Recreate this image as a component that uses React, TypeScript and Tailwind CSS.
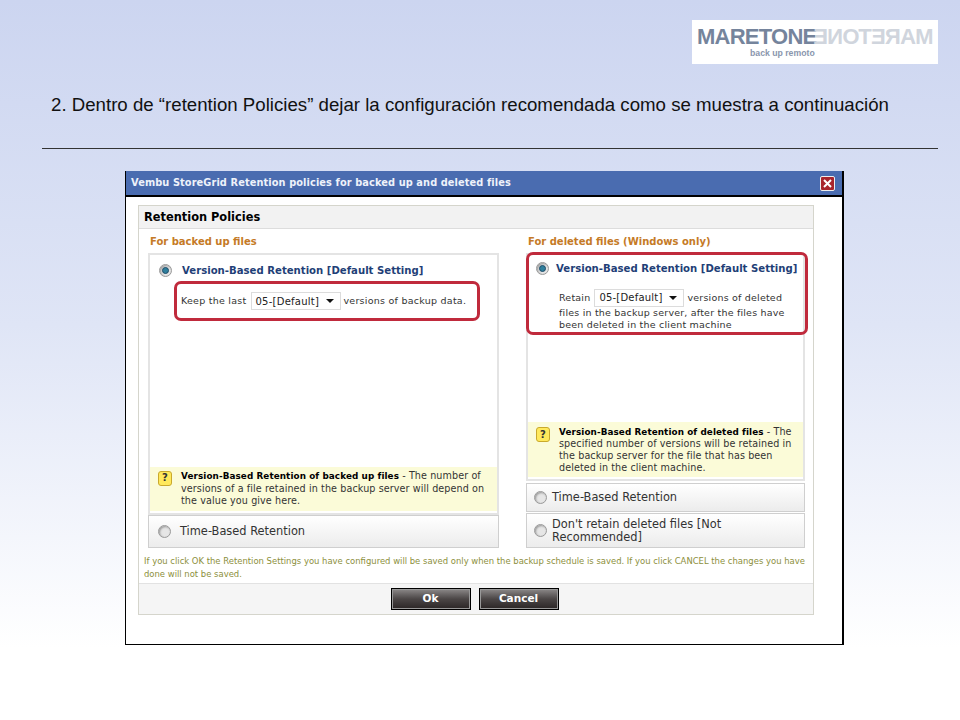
const ui = "font-['DejaVu_Sans',sans-serif]";

function Radio({ on = false }: { on?: boolean }) {
  return (
    <span className="flex h-[13px] w-[13px] shrink-0 items-center justify-center rounded-full border border-[#9a9a9a] bg-[#e6e6e6] shadow-[inset_1px_1px_2px_#999]">
      {on && <span className="h-[7px] w-[7px] rounded-full border border-[#1d4a66] bg-[#2f7f9c]" />}
    </span>
  );
}

function Help({ title, children, className }: { title: string; children: string; className: string }) {
  return (
    <div className={`flex gap-[9px] bg-[#fbfbd8] pr-1 text-[9.6px] tracking-[0.1px] text-[#333] ${className}`}>
      <span className="mt-[1px] flex h-[15px] w-[14px] shrink-0 items-center justify-center rounded-[3px] border border-[#c9a92c] bg-[#ffe95c] text-[10px] font-bold text-[#333]">
        ?
      </span>
      <p>
        <b className="text-[8.8px] text-black">{title}</b> - {children}
      </p>
    </div>
  );
}

function Select({ className }: { className: string }) {
  return (
    <span className={`flex h-[18px] w-[90px] shrink-0 items-center justify-between border border-[#dcdcdc] bg-white pl-[4px] pr-[3px] text-[10px] text-[#222] ${className}`}>
      05-[Default]
      <svg width="8" height="4" viewBox="0 0 8 4" className="mr-[3px]">
        <path d="M0 0h8L4 4z" fill="#111" />
      </svg>
    </span>
  );
}

function OptionRow({ label, className }: { label: string; className: string }) {
  return (
    <div className={`flex items-center border border-[#cfcfcf] bg-gradient-to-b from-white to-[#ececec] text-[11.4px] leading-[13px] text-[#333] ${className}`}>
      <Radio />
      <span>{label}</span>
    </div>
  );
}

export default function App() {
  return (
    <div className="flex h-[720px] w-[960px] flex-col overflow-hidden bg-gradient-to-b from-[#ccd5f0] from-0% via-[#dfe5f6] via-[45%] to-white to-[90%]">
      <header className="flex justify-end pr-[22px] pt-[20px]">
        <div className="flex h-[44px] w-[246px] flex-col bg-white pl-[5px] pt-[5px] font-['Liberation_Sans',sans-serif]">
          <div className="flex text-[22px] font-bold leading-[24px] tracking-[-0.75px]">
            <span className="text-[#75849c]">MARETONE</span>
            <span className="ml-[-3px] scale-x-[-1] text-[#d0d5dd]">MARETONE</span>
          </div>
          <span className="ml-[53px] mt-[-1px] text-[8.7px] font-bold leading-[11px] text-[#8a96ad]">back up remoto</span>
        </div>
      </header>

      <h1 className="ml-[51px] mt-[32px] font-['Liberation_Sans',sans-serif] text-[18.66px] leading-[18px] text-[#111] whitespace-nowrap">
        2. Dentro de “retention Policies” dejar la configuración recomendada como se muestra a continuación
      </h1>
      <hr className="ml-[42px] mt-[34px] w-[896px] border-t border-[#333]" />

      <section className={`relative ml-[125px] mt-[22px] h-[474px] w-[719px] border-b border-l border-r-2 border-black bg-white ${ui}`}>
        <div className="flex h-[26px] items-center justify-between border-b-2 border-black bg-[#4a6cb0] pl-[5px] pr-[7px] text-[9.8px] font-bold tracking-[0.1px] text-[#eef2fa]">
          Vembu StoreGrid Retention policies for backed up and deleted files
          <span className="flex h-[15px] w-[15px] items-center justify-center rounded-[2px] border border-[#eee] bg-[#a8242c]">
            <svg width="9" height="9" viewBox="0 0 9 9">
              <path d="M1 1l7 7M8 1L1 8" stroke="#fff" strokeWidth="2" />
            </svg>
          </span>
        </div>

        <div className="ml-[12px] mt-[8px] w-[676px] border border-[#d5d5cc] bg-white">
          <div className="flex h-[23px] items-center border-b border-[#ddd] bg-[#f2f2f2] pl-[5px] pt-[1px] text-[11.4px] font-bold text-black">
            Retention Policies
          </div>

          <div className="flex h-[319px]">
            <div className="ml-[9px] flex w-[351px] flex-col">
              <div className="flex h-[24px] items-center pl-[2px] pt-[1px] text-[10px] font-bold text-[#c57a26]">For backed up files</div>
              <div className="flex h-[262px] flex-col border-2 border-[#e4e4e4]">
                <div className="flex items-center gap-[10px] pl-[9px] pt-[8px] text-[10.15px] font-bold text-[#1f3f77]">
                  <Radio on />
                  Version-Based Retention [Default Setting]
                </div>
                <div className="flex items-center pl-[31px] pt-[14px] text-[9.5px] tracking-[0.25px] text-[#333]">
                  Keep the last
                  <Select className="ml-[4px] mr-[3px]" />
                  versions of backup data.
                </div>
                <div className="mb-[2px] mt-auto">
                  <Help title="Version-Based Retention of backed up files" className="h-[44px] pl-[8px] pt-[3px] leading-[12.5px]">
                    The number of versions of a file retained in the backup server will depend on the value you give here.
                  </Help>
                </div>
              </div>
              <OptionRow label="Time-Based Retention" className="h-[33px] gap-[9px] pl-[9px]" />
            </div>

            <div className="ml-[27px] flex w-[279px] flex-col">
              <div className="flex h-[24px] items-center pl-[2px] pt-[1px] text-[10px] font-bold text-[#c57a26]">For deleted files (Windows only)</div>
              <div className="flex h-[229px] flex-col border-2 border-[#e4e4e4]">
                <div className="flex items-center gap-[7px] pl-[8px] pt-[6px] text-[10.15px] font-bold text-[#1f3f77]">
                  <Radio on />
                  Version-Based Retention [Default Setting]
                </div>
                <div className="pl-[31px] pt-[13px] text-[9.5px] leading-[12px] tracking-[0.2px] text-[#333]">
                  <div className="flex h-[18px] items-center">
                    Retain
                    <Select className="ml-[4px] mr-[3px]" />
                    versions of deleted
                  </div>
                  <p>
                    files in the backup server, after the files have
                    <br />
                    been deleted in the client machine
                  </p>
                </div>
                <div className="mb-[2px] mt-auto">
                  <Help title="Version-Based Retention of deleted files" className="h-[55px] pl-[8px] pt-[4px] leading-[12px]">
                    The specified number of versions will be retained in the backup server for the file that has been deleted in the client machine.
                  </Help>
                </div>
              </div>
              <OptionRow label="Time-Based Retention" className="mt-[2px] h-[29px] gap-[5px] pl-[7px]" />
              <OptionRow label="Don't retain deleted files [Not Recommended]" className="mt-[1px] h-[35px] gap-[5px] pl-[7px]" />
            </div>
          </div>

          <p className="pl-[5px] pt-[7px] text-[8.45px] leading-[13px] text-[#8c8f3c]">
            If you click OK the Retention Settings you have configured will be saved only when the backup schedule is saved. If you click CANCEL the changes you have done will not be saved.
          </p>

          <div className="mt-[2px] flex h-[31px] items-center justify-center gap-[8px] border-t border-[#e2e2e2] bg-[#f5f5f5] pr-[3px]">
            {["Ok", "Cancel"].map((label) => (
              <button
                key={label}
                className="h-[22px] w-[80px] border border-black bg-gradient-to-b from-[#8d8a8a] via-[#4b4646] to-[#2b2626] text-[10.5px] font-bold text-white outline outline-1 -outline-offset-2 outline-[#999]"
              >
                {label}
              </button>
            ))}
          </div>
        </div>

        <div className="absolute left-[48px] top-[110px] h-[40px] w-[306px] rounded-[7px] border-[3px] border-[#c02a3c]" />
        <div className="absolute left-[400px] top-[81px] h-[83px] w-[282px] rounded-[7px] border-[3px] border-[#c02a3c]" />
      </section>
    </div>
  );
}
